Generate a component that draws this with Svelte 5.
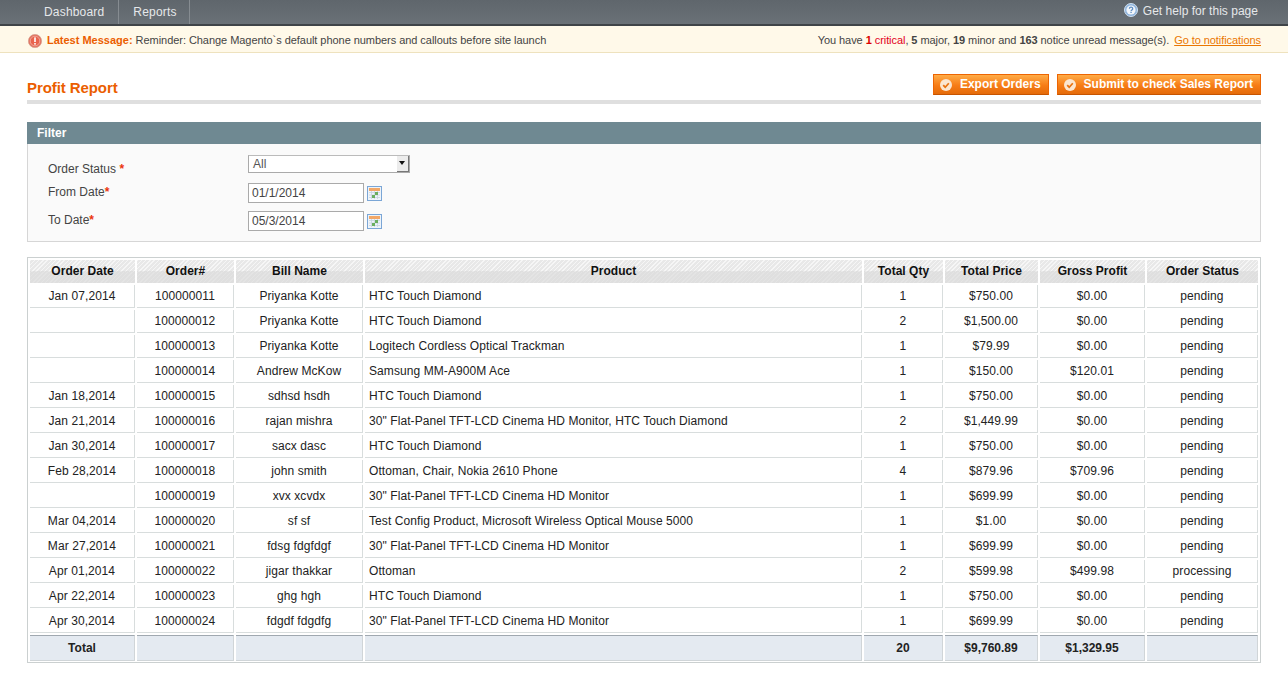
<script>
  const rows = [
    ['Jan 07,2014','100000011','Priyanka Kotte','HTC Touch Diamond','1','$750.00','$0.00','pending'],
    ['','100000012','Priyanka Kotte','HTC Touch Diamond','2','$1,500.00','$0.00','pending'],
    ['','100000013','Priyanka Kotte','Logitech Cordless Optical Trackman','1','$79.99','$0.00','pending'],
    ['','100000014','Andrew McKow','Samsung MM-A900M Ace','1','$150.00','$120.01','pending'],
    ['Jan 18,2014','100000015','sdhsd hsdh','HTC Touch Diamond','1','$750.00','$0.00','pending'],
    ['Jan 21,2014','100000016','rajan mishra','30" Flat-Panel TFT-LCD Cinema HD Monitor, HTC Touch Diamond','2','$1,449.99','$0.00','pending'],
    ['Jan 30,2014','100000017','sacx dasc','HTC Touch Diamond','1','$750.00','$0.00','pending'],
    ['Feb 28,2014','100000018','john smith','Ottoman, Chair, Nokia 2610 Phone','4','$879.96','$709.96','pending'],
    ['','100000019','xvx xcvdx','30" Flat-Panel TFT-LCD Cinema HD Monitor','1','$699.99','$0.00','pending'],
    ['Mar 04,2014','100000020','sf sf','Test Config Product, Microsoft Wireless Optical Mouse 5000','1','$1.00','$0.00','pending'],
    ['Mar 27,2014','100000021','fdsg fdgfdgf','30" Flat-Panel TFT-LCD Cinema HD Monitor','1','$699.99','$0.00','pending'],
    ['Apr 01,2014','100000022','jigar thakkar','Ottoman','2','$599.98','$499.98','processing'],
    ['Apr 22,2014','100000023','ghg hgh','HTC Touch Diamond','1','$750.00','$0.00','pending'],
    ['Apr 30,2014','100000024','fdgdf fdgdfg','30" Flat-Panel TFT-LCD Cinema HD Monitor','1','$699.99','$0.00','pending']
  ];
  const heads = ['Order Date','Order#','Bill Name','Product','Total Qty','Total Price','Gross Profit','Order Status'];
  const totals = ['Total','','','','20','$9,760.89','$1,329.95',''];
</script>

<div class="page">
  <header class="nav">
    <ul class="menu">
      <li>Dashboard</li>
      <li>Reports</li>
    </ul>
    <span class="help">
      <svg width="14" height="14" viewBox="0 0 14 14">
        <circle cx="7" cy="7" r="6.5" fill="#8fb4dc" stroke="#cfe0f2"/>
        <circle cx="7" cy="7" r="4.6" fill="#f2f6fb"/>
        <path d="M5.4 5.8c0-2.1 3.3-2.1 3.3-.1 0 1.2-1.6 1.2-1.6 2.4" fill="none" stroke="#5f8fc4" stroke-width="1.3"/>
        <rect x="6.4" y="8.7" width="1.3" height="1.3" fill="#5f8fc4"/>
      </svg>
      Get help for this page
    </span>
  </header>

  <div class="notice">
    <div class="latest">
      <svg width="14" height="14" viewBox="0 0 14 14">
        <circle cx="7" cy="7" r="6.6" fill="#e2705c" stroke="#d9a08f" stroke-width=".8"/>
        <circle cx="7" cy="7" r="4.8" fill="#e9634c" stroke="#f3b3a4" stroke-width=".8"/>
        <rect x="6.2" y="3.4" width="1.6" height="4.6" fill="#fff"/>
        <rect x="6.2" y="9" width="1.6" height="1.6" fill="#fff"/>
      </svg>
      <strong>Latest Message:</strong> Reminder: Change Magento`s default phone numbers and callouts before site launch
    </div>
    <div class="counts">
      You have <b class="crit">1</b> <span class="crit">critical</span>, <b>5</b> major, <b>19</b> minor and <b>163</b> notice unread message(s). <span class="link">Go to notifications</span>
    </div>
  </div>

  <main class="content">
    <div class="title-row">
      <h1>Profit Report</h1>
      <div class="actions">
        <button type="button">
          <svg width="12" height="12" viewBox="0 0 12 12"><circle cx="6" cy="6" r="6" fill="#fbe6d0"/><path d="M3.2 6.2l2 2 3.6-4" fill="none" stroke="#e8720f" stroke-width="1.7"/></svg>
          Export Orders
        </button>
        <button type="button">
          <svg width="12" height="12" viewBox="0 0 12 12"><circle cx="6" cy="6" r="6" fill="#fbe6d0"/><path d="M3.2 6.2l2 2 3.6-4" fill="none" stroke="#e8720f" stroke-width="1.7"/></svg>
          Submit to check Sales Report
        </button>
      </div>
    </div>

    <section class="filter">
      <h2>Filter</h2>
      <div class="fields">
        <div class="field f1">
          <span class="label">Order Status <em>*</em></span>
          <div class="select"><span>All</span><i class="arrow"></i></div>
        </div>
        <div class="field f2">
          <span class="label">From Date<em>*</em></span>
          <div class="input">01/1/2014</div>
          <svg class="cal" width="15" height="15" viewBox="0 0 15 15">
            <rect x=".5" y=".5" width="14" height="14" fill="#eef4fa" stroke="#7ba6d6"/>
            <rect x="2" y="2" width="11" height="3" fill="#f2a868"/>
            <path d="M2 6.5h11M2 9h11M2 11.5h11M4.500 5v8M7.500 5v8M10.500 5v8" stroke="#c6d3de" stroke-width=".8"/>
            <rect x="8" y="6" width="3" height="3" fill="#6aaf5f"/>
            <rect x="5" y="9" width="3" height="3" fill="#6aaf5f"/>
          </svg>
        </div>
        <div class="field f3">
          <span class="label">To Date<em>*</em></span>
          <div class="input">05/3/2014</div>
          <svg class="cal" width="15" height="15" viewBox="0 0 15 15">
            <rect x=".5" y=".5" width="14" height="14" fill="#eef4fa" stroke="#7ba6d6"/>
            <rect x="2" y="2" width="11" height="3" fill="#f2a868"/>
            <path d="M2 6.5h11M2 9h11M2 11.5h11M4.500 5v8M7.500 5v8M10.500 5v8" stroke="#c6d3de" stroke-width=".8"/>
            <rect x="8" y="6" width="3" height="3" fill="#6aaf5f"/>
            <rect x="5" y="9" width="3" height="3" fill="#6aaf5f"/>
          </svg>
        </div>
      </div>
    </section>

    <div class="grid-wrap">
      <table>
        <thead>
          <tr>{#each heads as h}<th>{h}</th>{/each}</tr>
        </thead>
        <tbody>
          {#each rows as r}
            <tr>{#each r as c}<td>{c}</td>{/each}</tr>
          {/each}
        </tbody>
        <tfoot>
          <tr>{#each totals as t}<td>{t}</td>{/each}</tr>
        </tfoot>
      </table>
    </div>
  </main>
</div>

<style>
  :global(body) { margin: 0; background: #fff; }
  .page { font: 12px/1.25 "Liberation Sans", Arial, sans-serif; color: #444; width: 1288px; }

  .nav {
    height: 24px;
    background: linear-gradient(#5f666c, #6a7177);
    border-bottom: 2px solid #3f4448;
    display: flex;
    justify-content: space-between;
    color: #e6e8ea;
  }
  .menu { list-style: none; margin: 0 0 0 30px; padding: 0; display: flex; }
  .menu li { padding: 4px 14px 0 14px; border-right: 1px solid #868c91; line-height: 16px; letter-spacing: .18px; }
  .menu li:last-child { padding-right: 12px; }
  .help { display: flex; align-items: flex-start; gap: 5px; padding: 3px 30px 0 0; line-height: 16px; color: #e6e8ea; letter-spacing: .02px; }

  .notice {
    height: 27px;
    box-sizing: border-box;
    background: #fff9e9;
    border-bottom: 1px solid #eee2be;
    padding: 3px 27px 0 28px;
    display: flex;
    justify-content: space-between;
    align-items: center;
    font-size: 11px;
    color: #444;
  }
  .latest { display: flex; align-items: center; white-space: pre-wrap; letter-spacing: -.05px; }
  .latest svg { margin-right: 5px; }
  .latest strong { color: #eb5e00; letter-spacing: 0; }
  .counts { letter-spacing: -.065px; }
  .counts b { color: #444; }
  .counts .crit { color: #e3001b; }
  .counts b.crit { color: #d00; }
  .link { color: #ea7601; text-decoration: underline; margin-left: 2px; }

  .content { padding: 0 27px; }
  .title-row {
    height: 47px;
    box-sizing: content-box;
    border-bottom: 4px solid #dfdfdf;
    display: flex;
    justify-content: space-between;
    align-items: flex-start;
  }
  h1 { margin: 26px 0 0; font-size: 15px; line-height: 18px; font-weight: bold; color: #eb5e00; letter-spacing: -.08px; }
  .actions { display: flex; gap: 8px; padding-top: 21px; }
  button {
    height: 21px;
    box-sizing: border-box;
    border: 1px solid #ed6502;
    border-bottom-color: #c75400;
    background: linear-gradient(#ffac47, #f77c16 55%, #e46b0a);
    color: #fff;
    font: bold 12px/17px "Liberation Sans", Arial, sans-serif;
    padding: 0 7px 0 6px;
    display: flex;
    align-items: center;
    gap: 8px;
  }

  .filter { margin-top: 18px; }
  h2 {
    margin: 0;
    height: 22px;
    box-sizing: border-box;
    background: #6f8992;
    color: #fff;
    font-size: 12px;
    line-height: 23px;
    font-weight: bold;
    padding-left: 10px;
  }
  .fields {
    height: 98px;
    box-sizing: border-box;
    background: #fafafa;
    border: 1px solid #d6d6d6;
    border-top: 0;
    padding: 11px 0 0 20px;
  }
  .field { display: flex; align-items: flex-start; color: #444; }
  .label { width: 200px; display: block; line-height: 15px; }
  .label em { color: #eb340a; font-style: normal; font-weight: bold; }
  .f1 { height: 22px; }
  .f1 .label { padding-top: 7px; }
  .f2, .f3 { box-sizing: border-box; height: 28px; padding-top: 6px; }
  .f2 .label, .f3 .label { margin-top: 2px; }
  .select {
    width: 162px;
    height: 18px;
    box-sizing: border-box;
    border: 1px solid #aaa;
    border-top-color: #bbb;
    background: #fff;
    padding-left: 4px;
    line-height: 17px;
    position: relative;
    color: #555;
  }
  .arrow {
    position: absolute;
    right: 0;
    top: 0;
    width: 12px;
    height: 16px;
    box-sizing: border-box;
    background: #ececec;
    border-right: 1px solid #777;
    border-bottom: 1px solid #777;
  }
  .arrow::after {
    content: "";
    position: absolute;
    left: 2px;
    top: 5px;
    border: 3px solid transparent;
    border-top: 4px solid #111;
    border-bottom: 0;
  }
  .input {
    width: 116px;
    height: 20px;
    box-sizing: border-box;
    border: 1px solid #aaa;
    background: #fff;
    padding-left: 3px;
    line-height: 18px;
    color: #444;
  }
  .cal { margin: 3px 0 0 3px; }

  .grid-wrap {
    margin-top: 15px;
    border: 1px solid #cbd0d0;
    background: #fff;
    height: 406px;
    box-sizing: border-box;
  }
  table {
    table-layout: fixed;
    border-collapse: separate;
    border-spacing: 2px;
    width: 1232px;
    color: #222;
  }
  th:nth-child(1) { width: 105px; }
  th:nth-child(2) { width: 97px; }
  th:nth-child(3) { width: 127px; }
  th:nth-child(4) { width: 497px; }
  th:nth-child(5) { width: 79px; }
  th:nth-child(6) { width: 93px; }
  th:nth-child(7) { width: 105px; }
  th:nth-child(8) { width: 111px; }
  th, td { padding: 0; box-sizing: border-box; text-align: center; }
  th {
    height: 23px;
    font-weight: bold;
    color: #111;
    line-height: 21px;
    letter-spacing: .03px;
    background:
      repeating-linear-gradient(135deg, rgba(255,255,255,.6) 0 1px, rgba(255,255,255,0) 1px 3px) top / 100% 50% no-repeat,
      repeating-linear-gradient(135deg, rgba(255,255,255,.15) 0 1px, rgba(255,255,255,0) 1px 3px) bottom / 100% 50% no-repeat,
      linear-gradient(#e8e8e8 0 50%, #dfdfdf 50%);
  }
  tbody td {
    height: 23px;
    line-height: 21px;
    letter-spacing: .08px;
    padding-top: 1px;
    border-right: 1px solid #d8dddd;
    border-bottom: 1px solid #d8dddd;
  }
  tbody td:nth-child(4) { text-align: left; padding-left: 4px; }
  tfoot td {
    height: 26px;
    background: #e4eaf1;
    font-weight: bold;
    line-height: 24px;
    color: #222;
    border-top: 1px solid #a0a8b0;
    border-right: 1px solid #d0d5d8;
    border-bottom: 1px solid #d0d5d8;
  }
</style>
